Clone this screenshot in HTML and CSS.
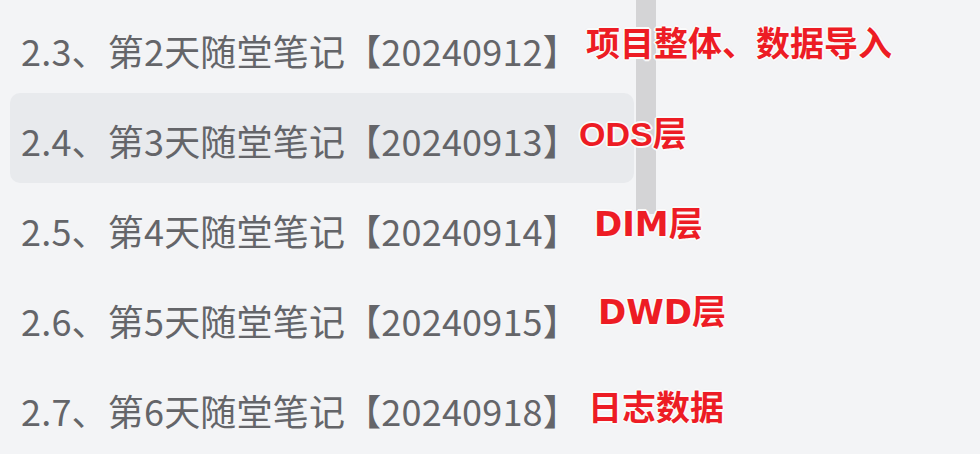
FILE: index.html
```html
<!DOCTYPE html>
<html lang="zh-CN">
<head>
<meta charset="utf-8">
<title>随堂笔记</title>
<link rel="stylesheet" href="styles.css">
</head>
<body>
<div class="page">
  <ul class="menu">
    <li class="item"><span class="label">2.3、第2天随堂笔记【20240912】</span><span class="note n1">项目整体、数据导入</span></li>
    <li class="item active"><span class="label">2.4、第3天随堂笔记【20240913】</span><span class="note n2">ODS层</span></li>
    <li class="item"><span class="label">2.5、第4天随堂笔记【20240914】</span><span class="note wide n3">DIM层</span></li>
    <li class="item"><span class="label">2.6、第5天随堂笔记【20240915】</span><span class="note wide n4">DWD层</span></li>
    <li class="item"><span class="label">2.7、第6天随堂笔记【20240918】</span><span class="note n5">日志数据</span></li>
  </ul>
  <div class="scrollbar"></div>
</div>
</body>
</html>
```
FILE: styles.css
```css
html, body {
  margin: 0;
  padding: 0;
  background: #f3f4f6;
}
.page {
  display: flex;
  align-items: flex-start;
  height: 454px;
  overflow: hidden;
}
.menu {
  list-style: none;
  margin: 0 0 0 10px;
  padding: 3px 0 0 0;
  width: 624px;
  flex: none;
}
.item {
  position: relative;
  display: flex;
  align-items: center;
  height: 90px;
  padding-left: 11px;
  border-radius: 10px;
  font-family: "Noto Sans CJK SC", "Liberation Sans", sans-serif;
  font-size: 36px;
  letter-spacing: 0.2px;
  color: #646569;
  white-space: nowrap;
}
.item.active {
  background: #e8eaed;
}
.label {
  position: relative;
  top: 2px;
}
.scrollbar {
  flex: none;
  width: 20px;
  height: 214px;
  margin-left: 2px;
  background: #d4d4d6;
  border-radius: 0 0 3px 3px;
}
.note {
  position: absolute;
  z-index: 2;
  font-family: "Liberation Sans", "Noto Sans CJK SC", sans-serif;
  font-weight: 700;
  font-size: 34px;
  line-height: 34px;
  letter-spacing: 0;
  color: #ed1c24;
  text-shadow:
    2px 0 0 #fafafa, -2px 0 0 #fafafa, 0 2px 0 #fafafa, 0 -2px 0 #fafafa,
    1px 1px 0 #fafafa, -1px -1px 0 #fafafa, 1px -1px 0 #fafafa, -1px 1px 0 #fafafa,
    0 0 3px #cfcfcf;
}
.note.wide {
  font-family: "DejaVu Sans", "Noto Sans CJK SC", sans-serif;
}
.n1 { left: 576px; top: 24px; }
.n2 { left: 569px; top: 24px; }
.n3 { left: 584px; top: 24px; }
.n4 { left: 588px; top: 22px; }
.n5 { left: 578px; top: 28px; }
```
